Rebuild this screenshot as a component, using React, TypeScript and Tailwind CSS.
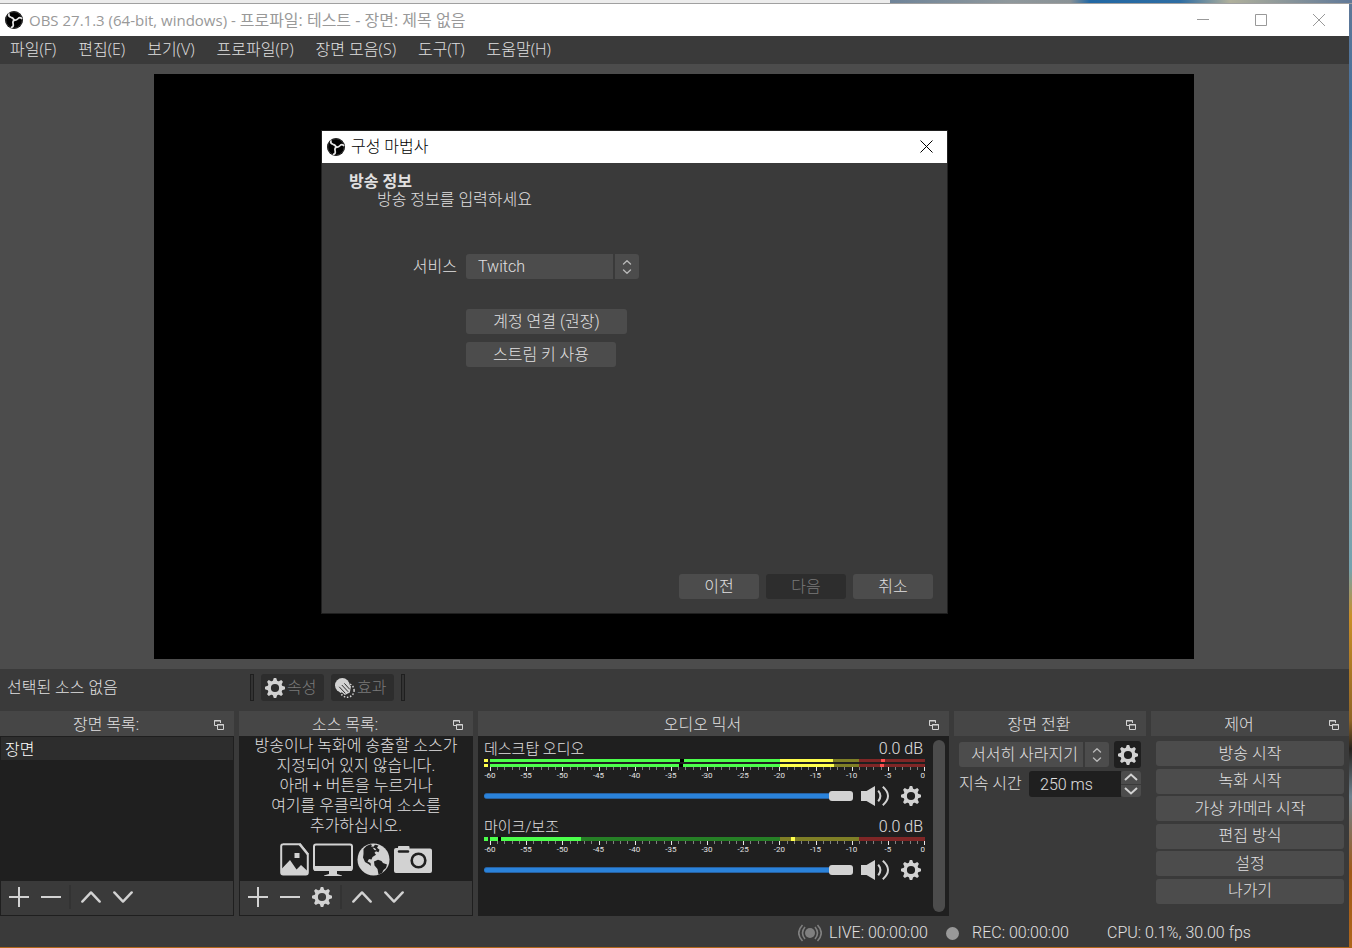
import React, { useState } from 'react';
import clsx from 'clsx';

const MENUS = ['파일(F)', '편집(E)', '보기(V)', '프로파일(P)', '장면 모음(S)', '도구(T)', '도움말(H)'];

const CONTROLS = ['방송 시작', '녹화 시작', '가상 카메라 시작', '편집 방식', '설정', '나가기'];

const BUTTON = 'flex h-[25px] items-center justify-center rounded-[3px] bg-[#4c4c4c] text-[#e1e0e1]';

interface Segment {
  from: number;
  to: number;
  y: number;
  h: number;
  fill: string;
}

interface Channel {
  name: string;
  meterTop: number;
  segments: Segment[];
}

const bar = (y: number, h: number, parts: [number, number, string][]): Segment[] =>
  parts.map(([from, to, fill]) => ({ from, to, y, h, fill }));

const DESKTOP: Channel = {
  name: '데스크탑 오디오',
  meterTop: 8,
  segments: [
    ...bar(0, 3, [
      [0, 4, '#ffff4c'], [6, 296, '#4cff4c'], [196, 200, '#000'], [296, 349, '#ffff4c'],
      [349, 375, '#7f7f26'], [375, 441, '#7f2626'], [397, 401, '#ff4c4c'],
    ]),
    ...bar(5, 3, [
      [0, 4, '#ffff4c'], [6, 296, '#4cff4c'], [195, 199, '#000'], [296, 350, '#ffff4c'],
      [350, 375, '#7f7f26'], [375, 441, '#7f2626'], [396, 400, '#ff4c4c'],
    ]),
  ],
};

const MIC: Channel = {
  name: '마이크/보조',
  meterTop: 4,
  segments: bar(0, 4, [
    [0, 4, '#4cff4c'], [6, 97, '#4cff4c'], [14, 17, '#000'], [97, 296, '#267f26'],
    [296, 375, '#7f7f26'], [307, 311, '#ffff4c'], [375, 441, '#7f2626'],
  ]),
};

const ObsLogo = () => (
  <svg viewBox="0 0 18 18" className="size-[18px] shrink-0" fill="none">
    <circle cx="9" cy="9" r="9" fill="#000" />
    <circle cx="9" cy="9" r="8.200" stroke="#555" strokeWidth=".6" />
    {[0, 120, 240].map((a) => (
      <path
        key={a}
        d="M9 9.300C8.700 7.200 7.600 6.600 6 6.300 4.500 5.900 3.500 4.900 3.900 3.200"
        stroke="#e6e6e6"
        strokeWidth="1.700"
        strokeLinecap="round"
        transform={`rotate(${a} 9 9)`}
      />
    ))}
  </svg>
);

const Gear = ({ className = 'size-5 shrink-0' }: { className?: string }) => (
  <svg viewBox="0 0 20 20" className={className} fill="#d2d2d2">
    <circle cx="10" cy="10" r="5.8" fill="none" stroke="#d2d2d2" strokeWidth="3.4" />
    {[0, 45, 90, 135, 180, 225, 270, 315].map((a) => (
      <path key={a} d="M7.6 3.4 8.8 0h2.4l1.2 3.4z" transform={`rotate(${a} 10 10)`} />
    ))}
  </svg>
);

const Effects = () => (
  <svg viewBox="0 0 20 20" className="size-5 shrink-0">
    <circle cx="12.2" cy="12.4" r="6.9" fill="none" stroke="#d2d2d2" strokeWidth="1.5" strokeDasharray="1.5 1.7" />
    <circle cx="7.3" cy="7.3" r="7.3" fill="#d2d2d2" />
    <path d="M10.6 2.6 16 8.4l-1.2 6.2-5 2.4-6.4-6.4z" fill="#d2d2d2" />
    <path d="M4.2 8.8l6.2 6.6M6.8 7l6.4 6.8M9.4 5.4l5.4 6" stroke="#2d2d2d" strokeWidth="1" fill="none" />
  </svg>
);

const Plus = () => (
  <svg viewBox="0 0 20 20" className="size-5" stroke="#d2d2d2" strokeWidth="2">
    <path d="M10 0v20M0 10h20" />
  </svg>
);

const Minus = () => (
  <svg viewBox="0 0 20 20" className="size-5" stroke="#d2d2d2" strokeWidth="2">
    <path d="M0 10h20" />
  </svg>
);

const Up = () => (
  <svg viewBox="0 0 20 20" className="size-5" stroke="#d2d2d2" strokeWidth="2.4" fill="none" strokeLinecap="round" strokeLinejoin="round">
    <path d="M1.3 14.6 10 5.4l8.7 9.2" />
  </svg>
);

const Down = () => (
  <svg viewBox="0 0 20 20" className="size-5" stroke="#d2d2d2" strokeWidth="2.4" fill="none" strokeLinecap="round" strokeLinejoin="round">
    <path d="M1.3 5.4 10 14.6l8.7-9.2" />
  </svg>
);

const Speaker = () => (
  <svg viewBox="0 0 28 20" className="h-5 w-7" fill="none" stroke="#d2d2d2" strokeWidth="2">
    <path d="M0 5h5.5L14 0v20l-8.5-5H0z" fill="#d2d2d2" stroke="none" />
    <path d="M17.2 4.6q4.4 5.4 0 10.8M21.8 .8q10.4 9.2 0 18.4" />
  </svg>
);

const FloatIcon = () => (
  <svg viewBox="0 0 10 10" className="size-[10px]" fill="none" stroke="#d2d2d2">
    <path d="M3.5 5.5h-3v-5h6v2.5M0 1h7" />
    <path d="M3.5 4.5h6v5h-6zM3 5h7" fill="#464646" />
  </svg>
);

const Spinner = () => (
  <svg viewBox="0 0 10 16" className="h-4 w-[10px]" fill="none" stroke="#b8b8b8" strokeWidth="1.4" strokeLinecap="round" strokeLinejoin="round">
    <path d="M1.5 5 5 1.8 8.5 5M1.5 11 5 14.2 8.5 11" />
  </svg>
);

const SourceIcons = () => (
  <div className="mt-[7px] flex items-center justify-center gap-1">
    <svg viewBox="0 0 29 33" className="h-[33px] w-[29px]">
      <path d="M3 1.2h17L27.8 11v18.5a2 2 0 0 1-2 2H3.200a2 2 0 0 1-2-2V3a2 2 0 0 1 2-1.800z" fill="none" stroke="#d2d2d2" strokeWidth="2" />
      <path d="M20 1v10h8z" fill="#1f1f1f" />
      <path d="M19.500 1 28 11.500" stroke="#d2d2d2" strokeWidth="2.400" />
      <path d="M1.500 31V26L10 17l6.500 9.500L21 22l6.500 6v3.500h-25z" fill="#d2d2d2" />
      <path d="M14.500 10h5v5h-5z" fill="#d2d2d2" />
    </svg>
    <svg viewBox="0 0 40 33" className="h-[33px] w-10">
      <rect x="1" y="1.5" width="38" height="25.500" rx="2" fill="none" stroke="#d2d2d2" strokeWidth="2" />
      <path d="M1 23h38v4q0 1-1 1H2q-1 0-1-1zM16 28h8v3l5 1.500v.5H11v-.5l5-1.500z" fill="#d2d2d2" />
    </svg>
    <svg viewBox="0 0 33 33" className="size-[33px]">
      <circle cx="16.500" cy="16.500" r="16" fill="#d2d2d2" />
      <path d="M6.500 6 9.500 3l4-1.800 1.500.8-1 1.500 2.500.3 1.500-2 3.500.7-1.500 2.300 2.500 2-1 2.500-2.500-1-1.500 1.500 1.500 2-3.500 2.200-1 2.500-2.500-.5-1.500 2.500 3 1.500.5 3-2.500-2-3.500-2L6 14.500 6.500 11z" fill="#1f1f1f" />
      <path d="M15.500 4.500l2.500.8 1.500 2-2-.3z" fill="#d2d2d2" />
      <path d="M17 18.500l4-1.800 3.500 1.300 1.500 2 4 1.500-1 3.500-2.500 2-1.500 3-3.500 1.500-1-5.500-3-3.500z" fill="#1f1f1f" />
    </svg>
    <svg viewBox="0 0 38 30" className="h-[30px] w-[38px]">
      <path d="M2 3h2V1.500Q4 1 5 1h9.500q1 0 1 1v1.500H36q2 0 2 2V26q0 2-2 2H2q-2 0-2-2V5q0-2 2-2z" fill="#d2d2d2" />
      <path d="M5 6.500h9" stroke="#1f1f1f" strokeWidth="2.400" strokeLinecap="round" />
      <circle cx="24.500" cy="15.500" r="6.800" fill="none" stroke="#1f1f1f" strokeWidth="2.600" />
    </svg>
  </div>
);

const DockHeader = ({ title }: { title: string }) => (
  <header className="grid h-[25px] grid-cols-[1fr_auto_1fr] items-center bg-[#464646] pt-[2px] pr-[10px]">
    <h2 className="col-start-2 pr-3">{title}</h2>
    <button aria-label={`${title} 분리`} className="justify-self-end">
      <FloatIcon />
    </button>
  </header>
);

const ListToolbar = ({ withGear }: { withGear?: boolean }) => (
  <div className="flex h-[34px] items-center gap-3 bg-[#3a3a3a] px-2 pb-[2px]">
    <button aria-label="추가"><Plus /></button>
    <button aria-label="제거"><Minus /></button>
    {withGear && <button aria-label="속성"><Gear /></button>}
    <span className="-mr-[2px] -ml-1 h-6 w-[2px] bg-[#333333]" />
    <button aria-label="위로"><Up /></button>
    <button aria-label="아래로"><Down /></button>
  </div>
);

const Meter = ({ channel }: { channel: Channel }) => {
  const top = channel.meterTop;
  const ticks = Array.from({ length: 61 }, (_, i) => i);
  return (
    <svg viewBox={`0 0 441 ${top + 14}`} className="block w-full font-normal" shapeRendering="crispEdges">
      {channel.segments.map((s, i) => (
        <rect key={i} x={s.from} y={s.y} width={s.to - s.from} height={s.h} fill={s.fill} />
      ))}
      {ticks.map((i) => {
        const x = Math.round(6 + (i * 434) / 60);
        return <rect key={i} x={x} y={top} width="1" height={i % 5 ? 3 : 4} fill={i % 5 ? '#808080' : '#e8e8e8'} />;
      })}
      {ticks.filter((i) => i % 5 === 0).map((i) => (
        <text
          key={i}
          x={i === 60 ? 441 : 6 + (i * 434) / 60}
          y={top + 11}
          textAnchor={i === 60 ? 'end' : 'middle'}
          fontSize="8"
          fill="#e1e0e1"
        >
          {i - 60}
        </text>
      ))}
    </svg>
  );
};

const MixerChannel = ({ channel }: { channel: Channel }) => {
  const [volume, setVolume] = useState(100);
  return (
    <section>
      <div className="flex h-[23px] items-center justify-between pt-[3px] pr-[2px]">
        <span className="text-[15px]">{channel.name}</span>
        <span>0.0 dB</span>
      </div>
      <Meter channel={channel} />
      <div className="mt-[5px] flex h-5 items-center">
        <input
          type="range"
          aria-label={channel.name}
          value={volume}
          onChange={(e) => setVolume(Number(e.target.value))}
          className="h-[6px] min-w-0 flex-1 appearance-none rounded-[3px] border-y border-[#27609f] bg-[#2a82da] [&::-webkit-slider-thumb]:h-[10px] [&::-webkit-slider-thumb]:w-6 [&::-webkit-slider-thumb]:appearance-none [&::-webkit-slider-thumb]:rounded-[3px] [&::-webkit-slider-thumb]:bg-[#d2d2d2]"
        />
        <button aria-label="음소거" className="ml-2"><Speaker /></button>
        <button aria-label="오디오 설정" className="mr-1 ml-3"><Gear /></button>
      </div>
    </section>
  );
};

const Combo = ({ id, value, className }: { id: string; value: string; className: string }) => (
  <div className={clsx('relative h-[25px]', className)}>
    <select
      id={id}
      aria-label={value}
      className="h-full w-full appearance-none rounded-[3px] bg-[#4c4c4c] pr-[26px] pl-3 leading-5"
    >
      <option>{value}</option>
    </select>
    <span className="pointer-events-none absolute inset-y-0 right-0 flex w-[26px] items-center justify-center border-l-2 border-[#3a3a3a]">
      <Spinner />
    </span>
  </div>
);

const Wizard = ({ onClose }: { onClose: () => void }) => (
  <div
    role="dialog"
    aria-label="구성 마법사"
    className="absolute top-[66px] left-[321px] flex h-[484px] w-[627px] flex-col border border-[#1f1f1f] bg-[#3a3a3a]"
  >
    <div className="flex h-8 items-center bg-white pr-[14px] pb-px pl-[5px] font-normal text-black">
      <ObsLogo />
      <span className="ml-[6px] flex-1 font-light">구성 마법사</span>
      <button aria-label="닫기" onClick={onClose}>
        <svg viewBox="0 0 13 13" className="size-[13px]" stroke="#000">
          <path d="M.5.5l12 12M12.500.5l-12 12" />
        </svg>
      </button>
    </div>
    <div className="flex flex-1 flex-col pr-[14px] pb-[14px] pl-[27px]">
      <h1 className="mt-[10px] leading-[18px] font-bold">방송 정보</h1>
      <p className="pl-7 leading-[18px]">방송 정보를 입력하세요</p>
      <div className="mt-[45px] flex items-center">
        <label htmlFor="service" className="w-[108px] text-right">서비스</label>
        <Combo id="service" value="Twitch" className="ml-[9px] w-[173px]" />
      </div>
      <div className="mt-[30px] ml-[117px] flex flex-col items-start gap-2">
        <button className={clsx(BUTTON, 'w-[161px]')}>계정 연결 (권장)</button>
        <button className={clsx(BUTTON, 'w-[150px]')}>스트림 키 사용</button>
      </div>
      <div className="mt-auto flex justify-end gap-[7px]">
        <button className={clsx(BUTTON, 'w-20')}>이전</button>
        <button disabled className="flex h-[25px] w-20 items-center justify-center rounded-[3px] bg-[#2d2d2d] text-[#7a7a7a]">
          다음
        </button>
        <button className={clsx(BUTTON, 'w-20')} onClick={onClose}>취소</button>
      </div>
    </div>
  </div>
);

export default function App() {
  const [wizardOpen, setWizardOpen] = useState(true);

  return (
    <div className="flex min-h-screen flex-col bg-[linear-gradient(to_bottom,#5f7898,#44709c_12%,#7b8798_25%,#8fa3a8_45%,#74a2ae_60%,#c98f28_65%,#8f6425_76%,#26221e_79%,#6f8390_84%,#a05a18_92%,#b0661a)] pr-[3px] pb-px font-[Roboto,'Noto_Sans_CJK_KR',sans-serif] text-[16px] leading-5 font-light text-[#e1e0e1]">
      <div className="-mr-[3px] h-1 border-b border-[#a0a0a0] bg-[linear-gradient(to_right,#ececec_0,#ececec_890px,#6f8499_890px,#8f989c_1010px,#8a9296_1070px,#2268a4_1090px,#2e6da3_1180px,#b0b09c_1230px,#5f7898_1352px)]" />

      <div className="flex h-8 items-center bg-white pb-px pl-[5px] font-['Open_Sans','Noto_Sans_CJK_KR',sans-serif] text-[#999999]">
        <ObsLogo />
        <p className="ml-[6px] flex-1 font-normal">
          <span className="text-[15px]">OBS 27.1.3 (64-bit, windows) - </span>
          프로파일: 테스트 - 장면: 제목 없음
        </p>
        <div className="flex items-center gap-[46px] pr-6">
          <button aria-label="최소화">
            <svg viewBox="0 0 12 12" className="size-3" stroke="#999"><path d="M0 5.500h12" /></svg>
          </button>
          <button aria-label="최대화">
            <svg viewBox="0 0 12 12" className="size-3" stroke="#999" fill="none"><path d="M.5.5h11v11H.5z" /></svg>
          </button>
          <button aria-label="닫기">
            <svg viewBox="0 0 12 12" className="size-3" stroke="#999"><path d="M0 0l12 12M12 0 0 12" /></svg>
          </button>
        </div>
      </div>

      <nav className="flex h-7 items-center gap-[22px] bg-[#3a3a3a] pb-[2px] pl-[10px] font-['Open_Sans','Noto_Sans_CJK_KR',sans-serif]">
        {MENUS.map((m) => (
          <button key={m}>{m}</button>
        ))}
      </nav>

      <main className="relative flex min-h-[605px] flex-1 bg-[#4c4c4c] py-[10px]">
        <div className="mr-[155px] ml-[154px] flex-1 bg-black" />
        {wizardOpen && <Wizard onClose={() => setWizardOpen(false)} />}
      </main>

      <div className="flex h-[42px] items-center bg-[#3a3a3a] pb-[5px] pl-[7px]">
        <span className="w-[243px]">선택된 소스 없음</span>
        <span className="h-[27px] w-1 border border-[#1f1f1f] bg-[#333333]" />
        <button disabled className="ml-[7px] flex h-[27px] w-[63px] items-center gap-[2px] rounded-[3px] bg-[#2d2d2d] pl-1 text-[#7a7a7a]">
          <Gear />속성
        </button>
        <button disabled className="ml-[7px] flex h-[27px] w-[63px] items-center gap-[2px] rounded-[3px] bg-[#2d2d2d] pl-1 text-[#7a7a7a]">
          <Effects />효과
        </button>
        <span className="ml-[7px] h-[27px] w-1 border border-[#1f1f1f] bg-[#333333]" />
      </div>

      <div className="grid h-[205px] grid-cols-[234fr_234fr_471fr_192fr_198fr] gap-[5px] bg-[#3a3a3a]">
        <section className="flex min-w-0 flex-col">
          <DockHeader title="장면 목록:" />
          <div className="flex flex-1 flex-col border border-[#1f1f1f] bg-[#1f1f1f]">
            <ul className="flex-1">
              <li className="flex h-[23px] items-center bg-[#2d2d2d] pt-[2px] pl-1 text-white">장면</li>
            </ul>
            <ListToolbar />
          </div>
        </section>

        <section className="flex min-w-0 flex-col">
          <DockHeader title="소스 목록:" />
          <div className="flex flex-1 flex-col border border-[#1f1f1f] bg-[#1f1f1f]">
            <div className="-mt-px flex-1">
              <p className="text-center whitespace-nowrap">
                방송이나 녹화에 송출할 소스가
                <br />
                지정되어 있지 않습니다.
                <br />
                아래 + 버튼을 누르거나
                <br />
                여기를 우클릭하여 소스를
                <br />
                추가하십시오.
              </p>
              <SourceIcons />
            </div>
            <ListToolbar withGear />
          </div>
        </section>

        <section className="flex min-w-0 flex-col">
          <DockHeader title="오디오 믹서" />
          <div className="flex flex-1 gap-2 bg-[#1f1f1f] pr-1 pl-[6px]">
            <div className="flex min-w-0 flex-1 flex-col gap-2">
              <MixerChannel channel={DESKTOP} />
              <MixerChannel channel={MIC} />
            </div>
            <div className="my-1 w-3 rounded-full bg-[#4c4c4c]" />
          </div>
        </section>

        <section className="flex min-w-0 flex-col">
          <DockHeader title="장면 전환" />
          <div className="flex flex-col gap-[3px] p-[5px]">
            <div className="flex items-center gap-[5px]">
              <Combo id="transition" value="서서히 사라지기" className="min-w-0 flex-1" />
              <button aria-label="전환 속성" className="flex size-[27px] items-center justify-center rounded-[3px] bg-[#1f1f1f]">
                <Gear />
              </button>
            </div>
            <div className="flex items-center">
              <label htmlFor="duration" className="w-[70px] shrink-0">지속 시간</label>
              <input id="duration" defaultValue="250 ms" className="h-[26px] w-0 flex-1 rounded-l-[3px] bg-[#1f1f1f] pl-[11px]" />
              <div className="flex h-[26px] w-5 flex-col gap-px">
                <button aria-label="늘리기" className="flex flex-1 items-center justify-center rounded-t-[3px] bg-[#4c4c4c]">
                  <svg viewBox="0 0 14 8" className="h-2 w-[14px]" fill="none" stroke="#d2d2d2" strokeWidth="2"><path d="M1 7l6-5.500L13 7" /></svg>
                </button>
                <button aria-label="줄이기" className="flex flex-1 items-center justify-center rounded-b-[3px] bg-[#4c4c4c]">
                  <svg viewBox="0 0 14 8" className="h-2 w-[14px]" fill="none" stroke="#d2d2d2" strokeWidth="2"><path d="M1 1l6 5.500L13 1" /></svg>
                </button>
              </div>
            </div>
          </div>
        </section>

        <section className="flex min-w-0 flex-col">
          <DockHeader title="제어" />
          <div className="flex h-[173px] flex-col justify-between p-[5px]">
            {CONTROLS.map((c) => (
              <button key={c} className={BUTTON}>{c}</button>
            ))}
          </div>
        </section>
      </div>

      <footer className="flex h-[31px] items-center justify-end bg-[#3a3a3a] pt-[3px] pr-[84px]">
        <svg viewBox="0 0 24 18" className="h-[18px] w-6" fill="none" stroke="#7f7f7f" strokeWidth="1.6">
          <circle cx="12" cy="9" r="5" fill="#7f7f7f" stroke="none" />
          <path d="M7 3q-5 6 0 12M17 3q5 6 0 12M4.500 1q-7.500 8 0 16M19.500 1q7.500 8 0 16" />
        </svg>
        <span className="ml-[7px] w-[117px]">LIVE: 00:00:00</span>
        <span className="size-[13px] rounded-full bg-[#999999]" />
        <span className="ml-[13px] w-[135px]">REC: 00:00:00</span>
        <span className="w-[158px]">CPU: 0.1%, 30.00 fps</span>
      </footer>
    </div>
  );
}
